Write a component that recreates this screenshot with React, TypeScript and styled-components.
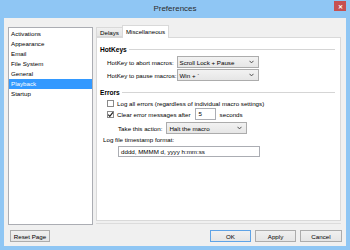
import React from 'react';
import styled, { createGlobalStyle } from 'styled-components';

const GlobalStyle = createGlobalStyle`
  html, body {
    margin: 0;
    padding: 0;
    background: #ffffff;
  }
  * {
    box-sizing: border-box;
  }
`

const pages = ['Activations', 'Appearance', 'Email', 'File System', 'General', 'Playback', 'Startup']

const Chevron: React.FC = () => (
  <svg width="5" height="4" viewBox="0 0 5 4">
    <path d="M0.5 0.8 L2.5 2.9 L4.5 0.8" fill="none" stroke="#404040" strokeWidth="0.9" />
  </svg>
)

const Check: React.FC = () => (
  <svg width="7" height="7" viewBox="0 0 7 7">
    <path d="M1.2 3.6 L2.8 5.3 L5.9 1.3" fill="none" stroke="#222" strokeWidth="1.2" />
  </svg>
)

export default function App() {
  return (
    <>
      <GlobalStyle />
      <Window>
        <TitleBar>
          <span />
          <Title>Preferences</Title>
          <CloseButton>✕</CloseButton>
        </TitleBar>
        <Body>
          <Main>
            <PageList>
              {pages.map((p) => (
                <PageItem key={p} selected={p === 'Playback'}>{p}</PageItem>
              ))}
            </PageList>
            <Tabs>
              <TabStrip>
                <Tab>Delays</Tab>
                <Tab active>Miscellaneous</Tab>
              </TabStrip>
              <TabPanel>
                <GroupHeader>
                  <GroupTitle>HotKeys</GroupTitle>
                  <GroupLine />
                </GroupHeader>
                <GroupBody>
                  <FieldRow>
                    <FieldLabel>HotKey to abort macros:</FieldLabel>
                    <Select width={82}>
                      <span>Scroll Lock + Pause</span>
                      <Chevron />
                    </Select>
                  </FieldRow>
                  <FieldRow spaced>
                    <FieldLabel>HotKey to pause macros:</FieldLabel>
                    <Select width={82}>
                      <span>Win + `</span>
                      <Chevron />
                    </Select>
                  </FieldRow>
                </GroupBody>

                <GroupHeader top={7}>
                  <GroupTitle>Errors</GroupTitle>
                  <GroupLine />
                </GroupHeader>
                <GroupBody>
                  <CheckRow>
                    <CheckBox />
                    <Text>Log all errors (regardless of individual macro settings)</Text>
                  </CheckRow>
                  <CheckRow tall>
                    <CheckBox><Check /></CheckBox>
                    <Text>Clear error messages after</Text>
                    <NumberBox>5</NumberBox>
                    <Text>seconds</Text>
                  </CheckRow>
                  <ActionRow>
                    <Text>Take this action:</Text>
                    <Select width={81}>
                      <span>Halt the macro</span>
                      <Chevron />
                    </Select>
                  </ActionRow>
                </GroupBody>
                <FormatLabel>Log file timestamp format:</FormatLabel>
                <FormatInput>dddd, MMMM d, yyyy h:mm:ss</FormatInput>
              </TabPanel>
            </Tabs>
          </Main>
          <Footer>
            <Button width={40} inset>Reset Page</Button>
            <Spacer />
            <Button width={41} primary>OK</Button>
            <Button width={41}>Apply</Button>
            <Button width={42}>Cancel</Button>
          </Footer>
        </Body>
      </Window>
    </>
  )
}

const Window = styled.div`
  width: 350px;
  height: 250px;
  background: #8fc6f4;
  display: flex;
  flex-direction: column;
  font-family: "Liberation Sans", Arial, sans-serif;
  font-size: 6.2px;
  color: #000;
`

const TitleBar = styled.div`
  height: 18px;
  display: grid;
  grid-template-columns: 1fr auto 1fr;
  align-items: start;
`

const Title = styled.div`
  font-size: 8px;
  color: #2b2b2b;
  line-height: 18px;
`

const CloseButton = styled.div`
  justify-self: end;
  margin: 1px 4px 0 0;
  width: 12px;
  height: 10px;
  background: #c75050;
  color: #ffffff;
  font-size: 6px;
  font-weight: bold;
  display: flex;
  align-items: center;
  justify-content: center;
`

const Body = styled.div`
  flex: 1;
  margin: 0 4px 4px 4px;
  background: #f0f0f0;
  padding: 7px 4px 4px 4px;
  display: flex;
  flex-direction: column;
`

const Main = styled.div`
  display: flex;
  gap: 3px;
  height: 200px;
`

const PageList = styled.div`
  width: 85px;
  margin-top: 2px;
  height: 198px;
  background: #ffffff;
  border: 1px solid #abadb3;
  padding: 1px 0;
`

const PageItem = styled.div<{ selected?: boolean }>`
  height: 10px;
  line-height: 10px;
  padding-left: 2px;
  white-space: nowrap;
  background: ${(p) => (p.selected ? '#3399ff' : 'transparent')};
  color: ${(p) => (p.selected ? '#ffffff' : '#000')};
`

const Tabs = styled.div`
  flex: 1;
  display: flex;
  flex-direction: column;
  height: 196px;
`

const TabStrip = styled.div`
  display: flex;
  align-items: flex-end;
  height: 12px;
  position: relative;
  z-index: 1;
`

const Tab = styled.div<{ active?: boolean }>`
  height: ${(p) => (p.active ? '13px' : '10px')};
  padding: 0 3px;
  white-space: nowrap;
  line-height: ${(p) => (p.active ? '11px' : '9px')};
  border: 1px solid #d9d9d9;
  border-bottom: ${(p) => (p.active ? 'none' : '1px solid #d9d9d9')};
  margin-left: ${(p) => (p.active ? '-1px' : '0')};
  margin-bottom: ${(p) => (p.active ? '-1px' : '0')};
  background: ${(p) => (p.active ? '#ffffff' : 'linear-gradient(#f0f0f0, #e5e5e5)')};
`

const TabPanel = styled.div`
  flex: 1;
  background: #ffffff;
  border: 1px solid #d9d9d9;
  margin-right: 1px;
  padding: 7px 5px 0 3px;
  box-shadow: 0 2px 0 0 #f0f0f0, 0 3px 0 0 #dcdcdc;
`

const GroupHeader = styled.div<{ top?: number }>`
  display: flex;
  align-items: center;
  height: 8px;
  margin-top: ${(p) => p.top ?? 0}px;
`

const GroupTitle = styled.div`
  font-weight: bold;
  font-size: 6.6px;
`

const GroupLine = styled.div`
  flex: 1;
  height: 1px;
  margin-left: 2px;
  background: #d5d5d5;
`

const GroupBody = styled.div`
  padding-left: 7px;
  padding-top: 3px;
`

const FieldRow = styled.div<{ spaced?: boolean }>`
  display: flex;
  align-items: center;
  margin-top: ${(p) => (p.spaced ? '1px' : '0')};
`

const FieldLabel = styled.div`
  width: 69.5px;
  flex: none;
  white-space: nowrap;
`

const Select = styled.div<{ width: number }>`
  width: ${(p) => p.width}px;
  height: 12px;
  border: 1px solid #acacac;
  background: linear-gradient(#f2f2f2, #e6e6e6);
  display: flex;
  align-items: center;
  justify-content: space-between;
  padding: 0 4px 0 2px;
  white-space: nowrap;
`

const CheckRow = styled.div<{ tall?: boolean }>`
  display: flex;
  align-items: center;
  height: ${(p) => (p.tall ? '12px' : '9px')};
  gap: 2px;
`

const CheckBox = styled.div`
  width: 7px;
  height: 7px;
  border: 1px solid #8a8a8a;
  background: #ffffff;
  display: flex;
  align-items: center;
  justify-content: center;
  margin-right: 1px;
  svg {
    flex: none;
  }
`

const Text = styled.span`
  white-space: nowrap;
`

const NumberBox = styled.div`
  width: 21px;
  height: 12px;
  border: 1px solid #abadb3;
  background: #ffffff;
  margin: 0 2px 0 2px;
  padding-left: 3px;
  line-height: 10px;
`

const ActionRow = styled.div`
  display: flex;
  align-items: center;
  gap: 4px;
  margin-top: 2px;
  padding-left: 11px;
`

const FormatLabel = styled.div`
  margin-top: 2px;
  padding-left: 3px;
  height: 8px;
  line-height: 8px;
`

const FormatInput = styled.div`
  margin: 1.5px 0 0 18px;
  width: 142px;
  height: 11px;
  border: 1px solid #abadb3;
  background: #ffffff;
  padding-left: 2px;
  line-height: 9px;
  white-space: nowrap;
`

const Footer = styled.div`
  display: flex;
  gap: 4px;
  margin-top: 5px;
`

const Spacer = styled.div`
  flex: 1;
`

const Button = styled.div<{ width: number; primary?: boolean; inset?: boolean }>`
  width: ${(p) => p.width}px;
  height: 12px;
  margin-left: ${(p) => (p.inset ? '2px' : '0')};
  border: 1px solid ${(p) => (p.primary ? '#5fa3e6' : '#acacac')};
  background: linear-gradient(#f0f0f0, #e5e5e5);
  display: flex;
  align-items: center;
  justify-content: center;
  white-space: nowrap;
`
